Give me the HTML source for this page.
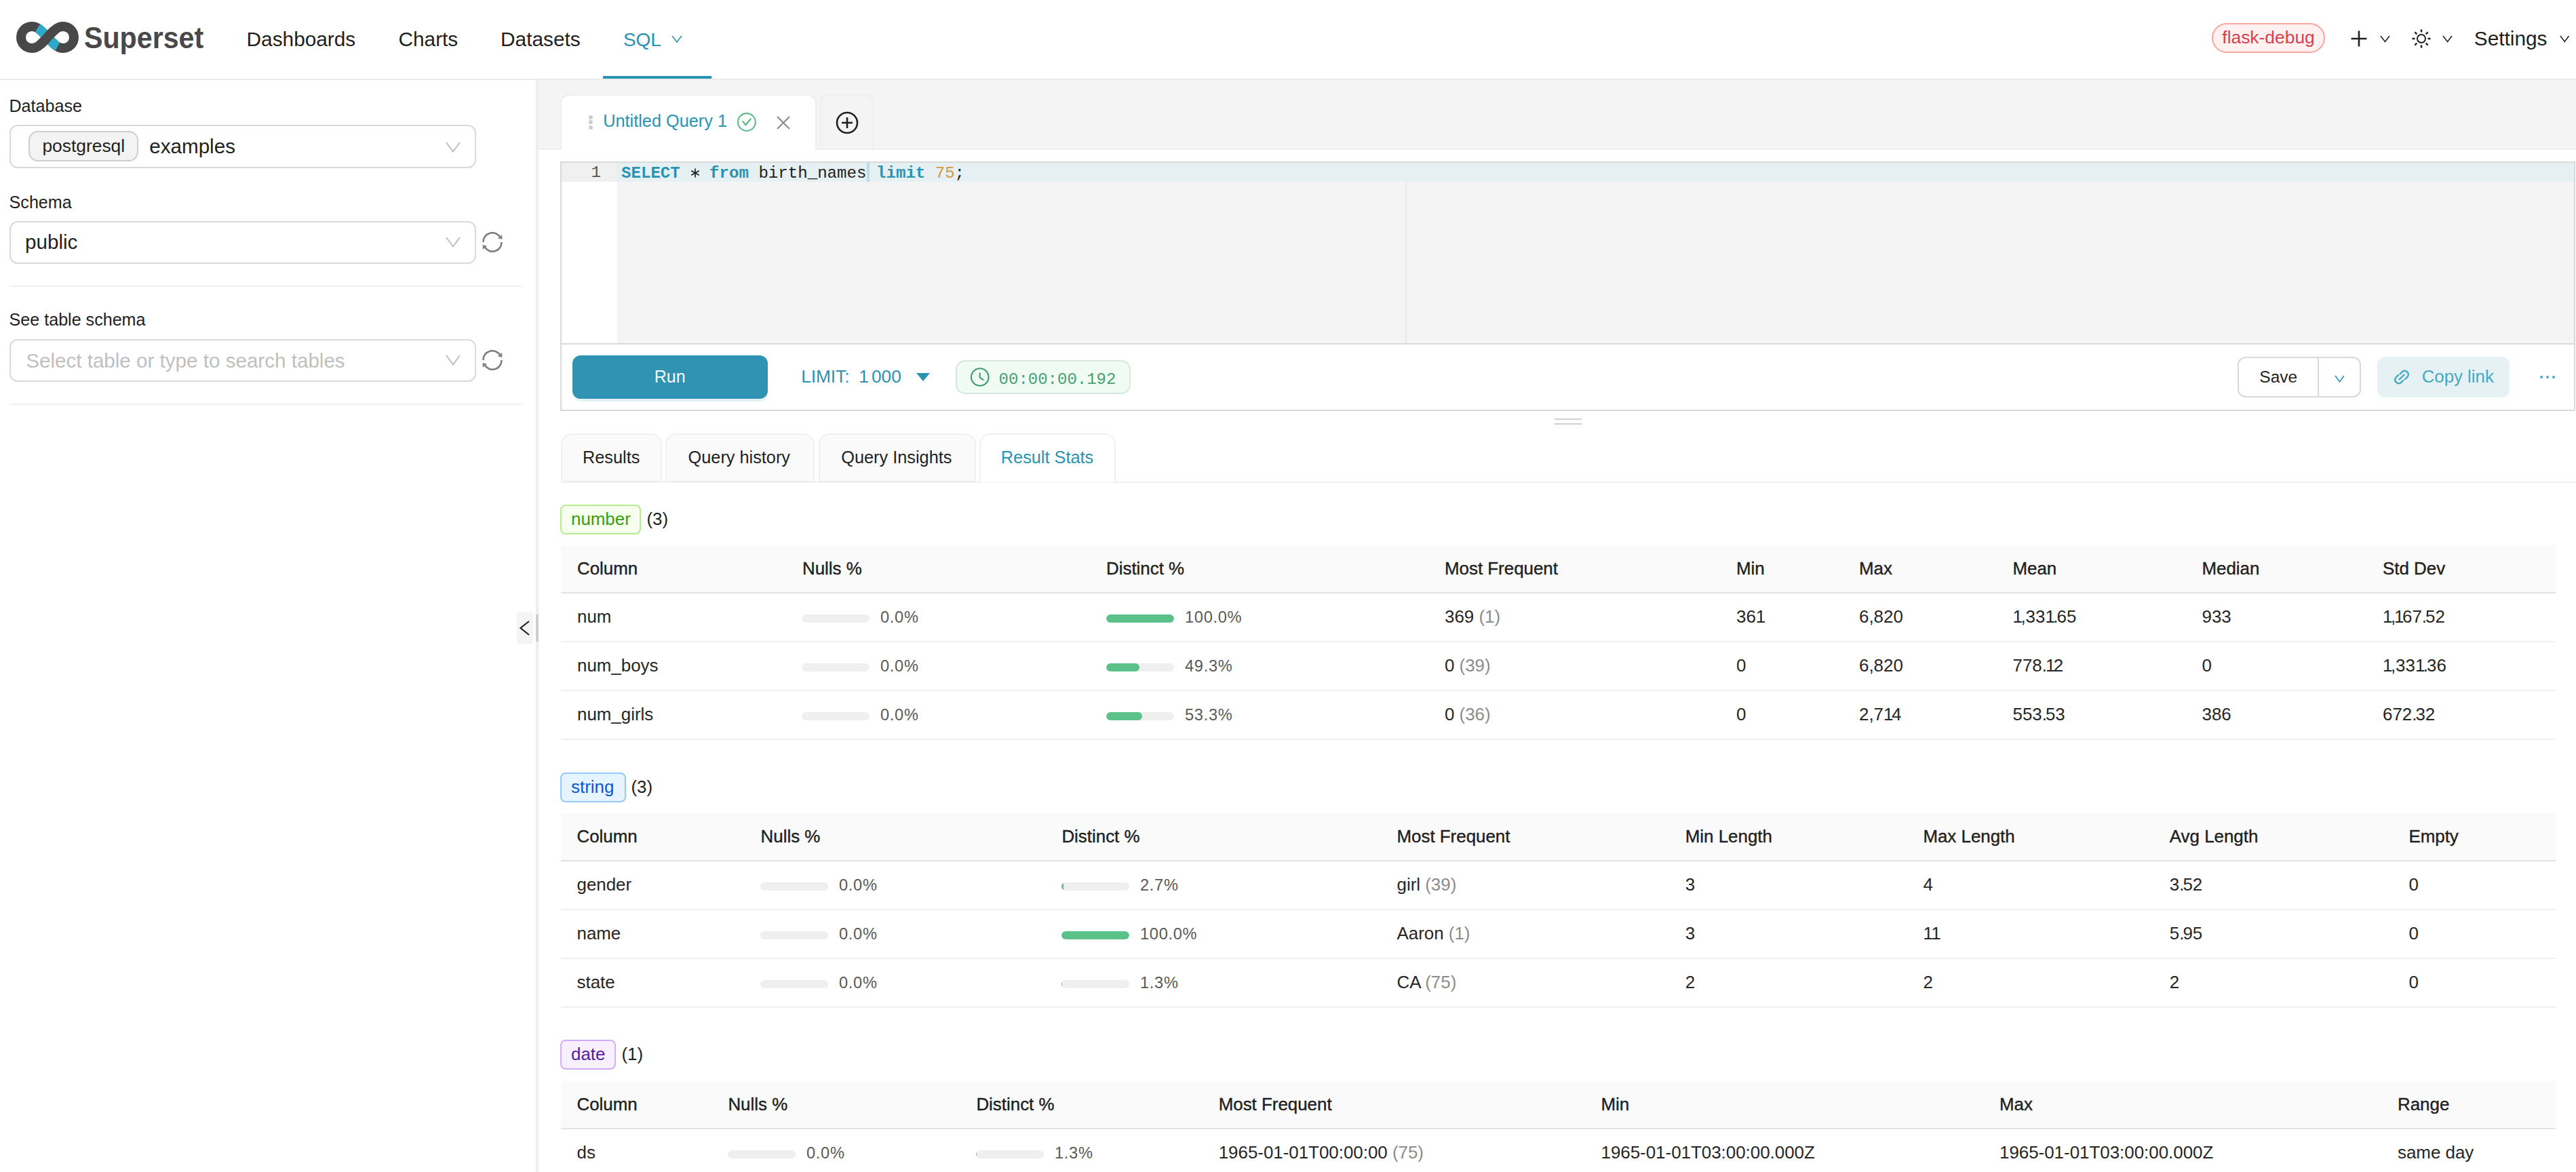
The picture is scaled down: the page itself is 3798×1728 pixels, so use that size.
<!DOCTYPE html>
<html><head><meta charset="utf-8"><title>Superset SQL Lab</title>
<style>
html,body{margin:0;padding:0;width:3798px;height:1728px;overflow:hidden;background:#fff;}
body{position:relative;font-family:"Liberation Sans", sans-serif;}
.b{position:absolute;}
.t{position:absolute;line-height:1;white-space:nowrap;}
</style></head><body>
<div class="b" style="left:0px;top:0px;width:3798px;height:116px;background:#fff;"></div>
<div class="b" style="left:0px;top:116px;width:3798px;height:2px;background:#ebebeb;"></div>
<svg class="b" style="left:24px;top:32px;" width="92" height="46" viewBox="0 0 92 46">
<g fill="none" stroke-width="14" stroke-linecap="butt">
<path d="M46 23 C56 13 60 7 69 7 C78 7 85 14 85 23 C85 32 78 39 69 39 C60 39 56 33 46 23 C36 13 32 7 23 7 C14 7 7 14 7 23 C7 32 14 39 23 39 C32 39 36 33 46 23" stroke="#484848"/>
<path d="M31.5 9.2 C37 12.5 41 17.5 46 23 C51 28.5 55 33.5 60.8 36.8" stroke="#2ea9c8"/>
<path d="M36 33.5 C40 30 43 26.5 46 23 C49 19.5 52 16 56 12.5" stroke="#484848"/>
</g></svg>
<div class="t" style="left:124px;top:33.6px;font-size:44.5px;font-weight:700;color:#484848;transform:scaleX(0.925);transform-origin:0 0;">Superset</div>
<div class="t" style="left:363.6px;top:43.2px;font-size:29.8px;color:#1f1f1f;">Dashboards</div>
<div class="t" style="left:587.5px;top:43.2px;font-size:29.8px;color:#1f1f1f;">Charts</div>
<div class="t" style="left:738.1px;top:43.2px;font-size:29.8px;color:#1f1f1f;">Datasets</div>
<div class="t" style="left:918.9px;top:44.7px;font-size:28px;color:#2893b3;">SQL</div>
<svg class="b" style="left:989px;top:50.5px;" width="18" height="13.0" viewBox="0 0 18 13.0"><polyline points="2,2 9.0,11.0 16,2" fill="none" stroke="#2893b3" stroke-width="1.6" stroke-linecap="butt" stroke-linejoin="miter"/></svg>
<div class="b" style="left:889px;top:112px;width:160px;height:4px;background:#2893b3;"></div>
<div class="b" style="left:3261px;top:34px;width:167px;height:43.5px;background:#fff1f0;border:2px solid #ffa39e;border-radius:22px;box-sizing:border-box;"></div>
<div class="t" style="left:3276.3px;top:42.2px;font-size:26.4px;color:#d9404f;">flask-debug</div>
<svg class="b" style="left:3466px;top:45px;" width="24" height="24" viewBox="0 0 24 24"><path d="M12 0.5 V23.5 M0.5 12 H23.5" stroke="#1f1f1f" stroke-width="2.6" fill="none"/></svg>
<svg class="b" style="left:3507.5px;top:50.5px;" width="17.0" height="12.5" viewBox="0 0 17.0 12.5"><polyline points="2,2 8.5,10.5 15.0,2" fill="none" stroke="#1f1f1f" stroke-width="1.5" stroke-linecap="butt" stroke-linejoin="miter"/></svg>
<svg class="b" style="left:3555px;top:43px;" width="30" height="28" viewBox="0 0 30 28"><circle cx="15" cy="14" r="6" fill="none" stroke="#1f1f1f" stroke-width="2"/><line x1="24.50" y1="14.00" x2="28.50" y2="14.00" stroke="#1f1f1f" stroke-width="2.5"/><line x1="21.72" y1="20.72" x2="24.55" y2="23.55" stroke="#1f1f1f" stroke-width="2.5"/><line x1="15.00" y1="23.50" x2="15.00" y2="27.50" stroke="#1f1f1f" stroke-width="2.5"/><line x1="8.28" y1="20.72" x2="5.45" y2="23.55" stroke="#1f1f1f" stroke-width="2.5"/><line x1="5.50" y1="14.00" x2="1.50" y2="14.00" stroke="#1f1f1f" stroke-width="2.5"/><line x1="8.28" y1="7.28" x2="5.45" y2="4.45" stroke="#1f1f1f" stroke-width="2.5"/><line x1="15.00" y1="4.50" x2="15.00" y2="0.50" stroke="#1f1f1f" stroke-width="2.5"/><line x1="21.72" y1="7.28" x2="24.55" y2="4.45" stroke="#1f1f1f" stroke-width="2.5"/></svg>
<svg class="b" style="left:3599.5px;top:50.5px;" width="17.0" height="12.5" viewBox="0 0 17.0 12.5"><polyline points="2,2 8.5,10.5 15.0,2" fill="none" stroke="#1f1f1f" stroke-width="1.5" stroke-linecap="butt" stroke-linejoin="miter"/></svg>
<div class="t" style="left:3647.8px;top:42.1px;font-size:29.8px;color:#1f1f1f;">Settings</div>
<svg class="b" style="left:3772.5px;top:50.5px;" width="16.5" height="12.5" viewBox="0 0 16.5 12.5"><polyline points="2,2 8.25,10.5 14.5,2" fill="none" stroke="#1f1f1f" stroke-width="1.5" stroke-linecap="butt" stroke-linejoin="miter"/></svg>
<div class="b" style="left:0px;top:118px;width:790px;height:1610px;background:#fff;"></div>
<div class="b" style="left:790px;top:118px;width:4px;height:1610px;background:#efefef;"></div>
<div class="t" style="left:13.5px;top:144.1px;font-size:25.1px;color:#1f1f1f;">Database</div>
<div class="b" style="left:14px;top:184px;width:688px;height:64px;border:2px solid #d9d9d9;border-radius:12px;box-sizing:border-box;background:#fff;"></div>
<div class="b" style="left:42px;top:193px;width:162px;height:45px;border:2px solid #cfcfcf;border-radius:14px;box-sizing:border-box;background:#f3f3f3;"></div>
<div class="t" style="left:62.4px;top:202.0px;font-size:26.4px;color:#1f1f1f;">postgresql</div>
<div class="t" style="left:220.3px;top:200.9px;font-size:29.6px;color:#1f1f1f;">examples</div>
<svg class="b" style="left:656px;top:207.5px;" width="24" height="17.5" viewBox="0 0 24 17.5"><polyline points="2,2 12.0,15.5 22,2" fill="none" stroke="#bfbfbf" stroke-width="2" stroke-linecap="butt" stroke-linejoin="miter"/></svg>
<div class="t" style="left:13.6px;top:286.0px;font-size:25.1px;color:#1f1f1f;">Schema</div>
<div class="b" style="left:14px;top:326px;width:688px;height:62.5px;border:2px solid #d9d9d9;border-radius:12px;box-sizing:border-box;background:#fff;"></div>
<div class="t" style="left:37.1px;top:342.0px;font-size:29.6px;color:#1f1f1f;">public</div>
<svg class="b" style="left:656px;top:348px;" width="24" height="17.5" viewBox="0 0 24 17.5"><polyline points="2,2 12.0,15.5 22,2" fill="none" stroke="#bfbfbf" stroke-width="2" stroke-linecap="butt" stroke-linejoin="miter"/></svg>
<svg class="b" style="left:711px;top:342px;" width="30" height="30" viewBox="0 0 30 30"><g fill="none" stroke="#808080" stroke-width="2.6">
<path d="M1.5 15 A13.3 13.3 0 0 1 26.5 8.2"/>
<path d="M28.5 15 A13.3 13.3 0 0 1 3.5 21.8"/>
</g>
<polygon points="29.3,4 29.3,10.8 22.9,9.4" fill="#808080"/>
<polygon points="0.7,19 0.7,25.8 7.2,20.7" fill="#808080"/></svg>
<div class="b" style="left:14px;top:421px;width:756px;height:2px;background:#f0f0f0;"></div>
<div class="t" style="left:13.6px;top:458.5px;font-size:25.1px;color:#1f1f1f;">See table schema</div>
<div class="b" style="left:14px;top:500px;width:688px;height:62.5px;border:2px solid #d9d9d9;border-radius:12px;box-sizing:border-box;background:#fff;"></div>
<div class="t" style="left:38.2px;top:516.6px;font-size:29.6px;color:#bfbfbf;">Select table or type to search tables</div>
<svg class="b" style="left:656px;top:522px;" width="24" height="17.5" viewBox="0 0 24 17.5"><polyline points="2,2 12.0,15.5 22,2" fill="none" stroke="#bfbfbf" stroke-width="2" stroke-linecap="butt" stroke-linejoin="miter"/></svg>
<svg class="b" style="left:711px;top:516px;" width="30" height="30" viewBox="0 0 30 30"><g fill="none" stroke="#808080" stroke-width="2.6">
<path d="M1.5 15 A13.3 13.3 0 0 1 26.5 8.2"/>
<path d="M28.5 15 A13.3 13.3 0 0 1 3.5 21.8"/>
</g>
<polygon points="29.3,4 29.3,10.8 22.9,9.4" fill="#808080"/>
<polygon points="0.7,19 0.7,25.8 7.2,20.7" fill="#808080"/></svg>
<div class="b" style="left:14px;top:595px;width:756px;height:2px;background:#f0f0f0;"></div>
<div class="b" style="left:762px;top:902px;width:24px;height:48px;background:#f4f4f4;border-radius:5px;"></div>
<svg class="b" style="left:765px;top:914px;" width="18" height="24" viewBox="0 0 18 24"><polyline points="15,2 2.5,12 15,22" fill="none" stroke="#1f1f1f" stroke-width="2.2" stroke-linejoin="miter"/></svg>
<div class="b" style="left:790px;top:906px;width:4px;height:40px;background:#cfcfcf;"></div>
<div class="b" style="left:794px;top:118px;width:3004px;height:1610px;background:#fff;"></div>
<div class="b" style="left:794px;top:118px;width:3004px;height:103px;background:#f4f4f4;"></div>
<div class="b" style="left:794px;top:219px;width:3004px;height:2px;background:#eeeeee;"></div>
<div class="b" style="left:826px;top:139px;width:378px;height:82px;background:#fff;border:2px solid #eeeeee;border-bottom:none;border-radius:14px 14px 0 0;box-sizing:border-box;"></div>
<div class="b" style="left:1209px;top:139px;width:79px;height:82px;background:#f4f4f4;border:2px solid #eeeeee;border-radius:14px 14px 0 0;box-sizing:border-box;"></div>
<div class="b" style="left:868px;top:169.5px;width:6px;height:6.0px;background:#cccccc;border-radius:50%;"></div>
<div class="b" style="left:868px;top:177px;width:6px;height:6px;background:#cccccc;border-radius:50%;"></div>
<div class="b" style="left:868px;top:184.5px;width:6px;height:6.0px;background:#cccccc;border-radius:50%;"></div>
<div class="t" style="left:889.2px;top:166.3px;font-size:25.3px;color:#2893b3;">Untitled Query 1</div>
<svg class="b" style="left:1086px;top:165px;" width="30" height="30" viewBox="0 0 30 30"><circle cx="14.9" cy="15" r="12.9" fill="none" stroke="#5cbb85" stroke-width="2.1"/><polyline points="9.3,14.1 13.4,19.2 20.7,10.4" fill="none" stroke="#5cbb85" stroke-width="2.3" stroke-linejoin="round" stroke-linecap="round"/></svg>
<svg class="b" style="left:1145px;top:171px;" width="20" height="20" viewBox="0 0 20 20"><path d="M1 1 L19 19 M19 1 L1 19" stroke="#8c8c8c" stroke-width="2.2"/></svg>
<svg class="b" style="left:1232px;top:164px;" width="34" height="34" viewBox="0 0 34 34"><circle cx="17" cy="17" r="15" fill="none" stroke="#1f1f1f" stroke-width="2.6"/><path d="M17 9 V25 M9 17 H25" stroke="#1f1f1f" stroke-width="2.6"/></svg>
<div class="b" style="left:826px;top:238px;width:2971px;height:368px;border:2px solid #d9d9d9;box-sizing:border-box;background:#fff;"></div>
<div class="b" style="left:828px;top:240px;width:2967px;height:266px;background:#f4f4f4;"></div>
<div class="b" style="left:828px;top:240px;width:82px;height:266px;background:#fff;"></div>
<div class="b" style="left:828px;top:240px;width:82px;height:28px;background:#f0f0f0;"></div>
<div class="b" style="left:910px;top:240px;width:2885px;height:28px;background:#e6f0f3;"></div>
<div class="b" style="left:2072px;top:268px;width:2px;height:238px;background:#ebebeb;"></div>
<div class="b" style="left:828px;top:506px;width:2967px;height:2px;background:#d9d9d9;"></div>
<div class="t" style="left:916.0px;top:243.5px;font-size:24.1px;color:#2893b3;font-weight:700;font-family:'Liberation Mono', monospace;">SELECT</div>
<svg class="b" style="left:1014.5px;top:244.6px;" width="20" height="20" viewBox="0 0 20 20"><line x1="10.00" y1="3.40" x2="10.00" y2="16.60" stroke="#1f1f1f" stroke-width="1.7"/><line x1="15.72" y1="6.70" x2="4.28" y2="13.30" stroke="#1f1f1f" stroke-width="1.7"/><line x1="15.72" y1="13.30" x2="4.28" y2="6.70" stroke="#1f1f1f" stroke-width="1.7"/></svg>
<div class="t" style="left:1046.1px;top:243.5px;font-size:24.1px;color:#2893b3;font-weight:700;font-family:'Liberation Mono', monospace;">from</div>
<div class="t" style="left:1118.4px;top:243.5px;font-size:24.1px;color:#1f1f1f;font-family:'Liberation Mono', monospace;">birth_names</div>
<div class="t" style="left:1292.0px;top:243.5px;font-size:24.1px;color:#2893b3;font-weight:700;font-family:'Liberation Mono', monospace;">limit</div>
<div class="t" style="left:1378.7px;top:243.5px;font-size:24.1px;color:#d19a3c;font-family:'Liberation Mono', monospace;">75</div>
<div class="t" style="left:1407.6px;top:243.5px;font-size:24.1px;color:#1f1f1f;font-family:'Liberation Mono', monospace;">;</div>
<div class="t" style="left:871.5px;top:242.9px;font-size:24.1px;color:#555;font-family:'Liberation Mono', monospace;">1</div>
<div class="b" style="left:1278px;top:240px;width:4px;height:28px;background:#bcdde7;"></div>
<div class="b" style="left:844px;top:524px;width:288px;height:64px;background:#3193b3;border-radius:12px;box-shadow:0 4px 0 #e6f2f5;"></div>
<div class="t" style="left:964.7px;top:542.8px;font-size:25px;color:#fff;">Run</div>
<div class="t" style="left:1181.2px;top:542.0px;font-size:26.2px;color:#2893b3;">LIMIT:</div>
<div class="t" style="left:1266.2px;top:542.0px;font-size:26.2px;color:#2893b3;">1<span style="letter-spacing:-3px"> </span>000</div>
<svg class="b" style="left:1351px;top:550px;" width="20" height="12" viewBox="0 0 20 12"><polygon points="0,0 20,0 10,12" fill="#2893b3"/></svg>
<div class="b" style="left:1409px;top:531px;width:258px;height:50px;background:#f0fcf3;border:2px solid #d5e8dc;border-radius:14px;box-sizing:border-box;"></div>
<svg class="b" style="left:1430px;top:541px;" width="30" height="30" viewBox="0 0 30 30"><circle cx="14.8" cy="15" r="12.8" fill="none" stroke="#3f9b6c" stroke-width="2.1"/><polyline points="14.6,8.5 14.6,15.5 20.2,19.3" fill="none" stroke="#3f9b6c" stroke-width="2"/></svg>
<div class="t" style="left:1472.6px;top:547.6px;font-size:24px;color:#46a073;font-family:'Liberation Mono', monospace;">00:00:00.192</div>
<div class="b" style="left:3299px;top:526px;width:182px;height:60px;border:2px solid #d9d9d9;border-radius:12px;box-sizing:border-box;background:#fff;"></div>
<div class="b" style="left:3417px;top:528px;width:2px;height:56px;background:#d9d9d9;"></div>
<div class="t" style="left:3331.3px;top:544.3px;font-size:24.5px;color:#1f1f1f;">Save</div>
<svg class="b" style="left:3440.5px;top:551.5px;" width="17.0" height="13.0" viewBox="0 0 17.0 13.0"><polyline points="2,2 8.5,11.0 15.0,2" fill="none" stroke="#2893b3" stroke-width="1.6" stroke-linecap="butt" stroke-linejoin="miter"/></svg>
<div class="b" style="left:3505px;top:526px;width:195px;height:60px;background:#e6f1f4;border-radius:12px;"></div>
<svg class="b" style="left:3527px;top:542px;" width="28" height="28" viewBox="0 0 28 28"><g fill="none" stroke="#46a8c4" stroke-width="2.4" stroke-linecap="round"><path d="M11.5 9.5 L15.5 5.5 A5.5 5.5 0 0 1 23 13 L19 17"/><path d="M16.5 18.5 L12.5 22.5 A5.5 5.5 0 0 1 5 15 L9 11"/><path d="M10.5 17.5 L17.5 10.5"/></g></svg>
<div class="t" style="left:3570.7px;top:542.5px;font-size:25.8px;color:#46a8c4;">Copy link</div>
<div class="b" style="left:3745px;top:554px;width:4px;height:4px;background:#46a8c4;border-radius:50%;"></div>
<div class="b" style="left:3754px;top:554px;width:4px;height:4px;background:#46a8c4;border-radius:50%;"></div>
<div class="b" style="left:3763px;top:554px;width:4px;height:4px;background:#46a8c4;border-radius:50%;"></div>
<div class="b" style="left:2292px;top:617px;width:40px;height:2px;background:#d0d0d0;"></div>
<div class="b" style="left:2292px;top:624px;width:40px;height:2px;background:#d0d0d0;"></div>
<div class="b" style="left:827px;top:710px;width:2971px;height:2px;background:#f0f0f0;"></div>
<div class="b" style="left:827px;top:639px;width:148.5px;height:72px;background:#fafafa;border:2px solid #f0f0f0;border-radius:16px 16px 0 0;box-sizing:border-box;"></div>
<div class="b" style="left:980.5px;top:639px;width:220.5px;height:72px;background:#fafafa;border:2px solid #f0f0f0;border-radius:16px 16px 0 0;box-sizing:border-box;"></div>
<div class="b" style="left:1206.5px;top:639px;width:232.5px;height:72px;background:#fafafa;border:2px solid #f0f0f0;border-radius:16px 16px 0 0;box-sizing:border-box;"></div>
<div class="b" style="left:1444px;top:639px;width:200.5px;height:72px;background:#fff;border:2px solid #f0f0f0;border-bottom:none;border-radius:16px 16px 0 0;box-sizing:border-box;"></div>
<div class="t" style="left:859.0px;top:662.0px;font-size:25.3px;color:#1f1f1f;">Results</div>
<div class="t" style="left:1014.6px;top:662.0px;font-size:25.3px;color:#1f1f1f;">Query history</div>
<div class="t" style="left:1240.3px;top:662.0px;font-size:25.3px;color:#1f1f1f;">Query Insights</div>
<div class="t" style="left:1475.8px;top:662.0px;font-size:25.3px;color:#2893b3;">Result Stats</div>
<div class="b" style="left:826px;top:744px;width:119px;height:43.5px;background:#f6ffed;border:2px solid #b7eb8f;border-radius:8px;box-sizing:border-box;"></div>
<div class="t" style="left:842.0px;top:752.6px;font-size:25.9px;color:#389e0d;">number</div>
<div class="t" style="left:953.4px;top:752.6px;font-size:25.9px;color:#1f1f1f;">(3)</div>
<div class="b" style="left:827px;top:804px;width:2941px;height:69px;background:#fafafa;"></div>
<div class="b" style="left:827px;top:873px;width:2941px;height:2px;background:#e3e3e3;"></div>
<div class="t" style="left:851.0px;top:826.1px;font-size:25.9px;color:#1f1f1f;-webkit-text-stroke:0.4px #1f1f1f;">Column</div>
<div class="t" style="left:1183.0px;top:826.1px;font-size:25.9px;color:#1f1f1f;-webkit-text-stroke:0.4px #1f1f1f;">Nulls %</div>
<div class="t" style="left:1631.0px;top:826.1px;font-size:25.9px;color:#1f1f1f;-webkit-text-stroke:0.4px #1f1f1f;">Distinct %</div>
<div class="t" style="left:2130.0px;top:826.1px;font-size:25.9px;color:#1f1f1f;-webkit-text-stroke:0.4px #1f1f1f;">Most Frequent</div>
<div class="t" style="left:2560.0px;top:826.1px;font-size:25.9px;color:#1f1f1f;-webkit-text-stroke:0.4px #1f1f1f;">Min</div>
<div class="t" style="left:2741.0px;top:826.1px;font-size:25.9px;color:#1f1f1f;-webkit-text-stroke:0.4px #1f1f1f;">Max</div>
<div class="t" style="left:2967.5px;top:826.1px;font-size:25.9px;color:#1f1f1f;-webkit-text-stroke:0.4px #1f1f1f;">Mean</div>
<div class="t" style="left:3246.5px;top:826.1px;font-size:25.9px;color:#1f1f1f;-webkit-text-stroke:0.4px #1f1f1f;">Median</div>
<div class="t" style="left:3513.0px;top:826.1px;font-size:25.9px;color:#1f1f1f;-webkit-text-stroke:0.4px #1f1f1f;">Std Dev</div>
<div class="t" style="left:851.0px;top:896.9px;font-size:25.9px;color:#262626;">num</div>
<div class="b" style="left:1182px;top:906px;width:100px;height:12px;background:#efefef;border-radius:6px;overflow:hidden;"></div>
<div class="t" style="left:1298.0px;top:898.5px;font-size:23.6px;color:#595959;letter-spacing:0.7px;">0.0%</div>
<div class="b" style="left:1631px;top:906px;width:100px;height:12px;background:#efefef;border-radius:6px;overflow:hidden;"><div style="width:100px;height:12px;background:#5ac189;border-radius:6px;"></div></div>
<div class="t" style="left:1747.0px;top:898.5px;font-size:23.6px;color:#595959;letter-spacing:0.7px;">100.0%</div>
<div class="t" style="left:2130px;top:896.9px;font-size:25.9px;color:#262626;">369 <span style="color:#8c8c8c">(1)</span></div>
<div class="t" style="left:2560.0px;top:896.9px;font-size:25.9px;color:#262626;">361</div>
<div class="t" style="left:2741.0px;top:896.9px;font-size:25.9px;color:#262626;">6,820</div>
<div class="t" style="left:2967.5px;top:896.9px;font-size:25.9px;color:#262626;"><span style="letter-spacing:-2.5px">1</span>,33<span style="letter-spacing:-2.5px">1</span><span style="letter-spacing:-2.0px">.</span>65</div>
<div class="t" style="left:3246.5px;top:896.9px;font-size:25.9px;color:#262626;">933</div>
<div class="t" style="left:3513.0px;top:896.9px;font-size:25.9px;color:#262626;"><span style="letter-spacing:-2.5px">1</span><span style="letter-spacing:-2.0px">,</span><span style="letter-spacing:-2.5px">1</span>67<span style="letter-spacing:-2.0px">.</span>52</div>
<div class="b" style="left:827px;top:945px;width:2941px;height:2px;background:#f0f0f0;"></div>
<div class="t" style="left:851.0px;top:968.9px;font-size:25.9px;color:#262626;">num_boys</div>
<div class="b" style="left:1182px;top:978px;width:100px;height:12px;background:#efefef;border-radius:6px;overflow:hidden;"></div>
<div class="t" style="left:1298.0px;top:970.5px;font-size:23.6px;color:#595959;letter-spacing:0.7px;">0.0%</div>
<div class="b" style="left:1631px;top:978px;width:100px;height:12px;background:#efefef;border-radius:6px;overflow:hidden;"><div style="width:49.3px;height:12px;background:#5ac189;border-radius:6px;"></div></div>
<div class="t" style="left:1747.0px;top:970.5px;font-size:23.6px;color:#595959;letter-spacing:0.7px;">49.3%</div>
<div class="t" style="left:2130px;top:968.9px;font-size:25.9px;color:#262626;">0 <span style="color:#8c8c8c">(39)</span></div>
<div class="t" style="left:2560.0px;top:968.9px;font-size:25.9px;color:#262626;">0</div>
<div class="t" style="left:2741.0px;top:968.9px;font-size:25.9px;color:#262626;">6,820</div>
<div class="t" style="left:2967.5px;top:968.9px;font-size:25.9px;color:#262626;">778<span style="letter-spacing:-2.0px">.</span><span style="letter-spacing:-2.5px">1</span>2</div>
<div class="t" style="left:3246.5px;top:968.9px;font-size:25.9px;color:#262626;">0</div>
<div class="t" style="left:3513.0px;top:968.9px;font-size:25.9px;color:#262626;"><span style="letter-spacing:-2.5px">1</span>,33<span style="letter-spacing:-2.5px">1</span><span style="letter-spacing:-2.0px">.</span>36</div>
<div class="b" style="left:827px;top:1017px;width:2941px;height:2px;background:#f0f0f0;"></div>
<div class="t" style="left:851.0px;top:1040.9px;font-size:25.9px;color:#262626;">num_girls</div>
<div class="b" style="left:1182px;top:1050px;width:100px;height:12px;background:#efefef;border-radius:6px;overflow:hidden;"></div>
<div class="t" style="left:1298.0px;top:1042.5px;font-size:23.6px;color:#595959;letter-spacing:0.7px;">0.0%</div>
<div class="b" style="left:1631px;top:1050px;width:100px;height:12px;background:#efefef;border-radius:6px;overflow:hidden;"><div style="width:53.3px;height:12px;background:#5ac189;border-radius:6px;"></div></div>
<div class="t" style="left:1747.0px;top:1042.5px;font-size:23.6px;color:#595959;letter-spacing:0.7px;">53.3%</div>
<div class="t" style="left:2130px;top:1040.9px;font-size:25.9px;color:#262626;">0 <span style="color:#8c8c8c">(36)</span></div>
<div class="t" style="left:2560.0px;top:1040.9px;font-size:25.9px;color:#262626;">0</div>
<div class="t" style="left:2741.0px;top:1040.9px;font-size:25.9px;color:#262626;">2,7<span style="letter-spacing:-2.5px">1</span>4</div>
<div class="t" style="left:2967.5px;top:1040.9px;font-size:25.9px;color:#262626;">553<span style="letter-spacing:-2.0px">.</span>53</div>
<div class="t" style="left:3246.5px;top:1040.9px;font-size:25.9px;color:#262626;">386</div>
<div class="t" style="left:3513.0px;top:1040.9px;font-size:25.9px;color:#262626;">672<span style="letter-spacing:-2.0px">.</span>32</div>
<div class="b" style="left:827px;top:1089px;width:2941px;height:2px;background:#f0f0f0;"></div>
<div class="b" style="left:826px;top:1139px;width:97px;height:43.5px;background:#e6f4ff;border:2px solid #91caff;border-radius:8px;box-sizing:border-box;"></div>
<div class="t" style="left:842.0px;top:1147.6px;font-size:25.9px;color:#0958d9;">string</div>
<div class="t" style="left:930.4px;top:1147.6px;font-size:25.9px;color:#1f1f1f;">(3)</div>
<div class="b" style="left:827px;top:1199px;width:2941px;height:69px;background:#fafafa;"></div>
<div class="b" style="left:827px;top:1268px;width:2941px;height:2px;background:#e3e3e3;"></div>
<div class="t" style="left:850.5px;top:1221.1px;font-size:25.9px;color:#1f1f1f;-webkit-text-stroke:0.4px #1f1f1f;">Column</div>
<div class="t" style="left:1121.6px;top:1221.1px;font-size:25.9px;color:#1f1f1f;-webkit-text-stroke:0.4px #1f1f1f;">Nulls %</div>
<div class="t" style="left:1565.4px;top:1221.1px;font-size:25.9px;color:#1f1f1f;-webkit-text-stroke:0.4px #1f1f1f;">Distinct %</div>
<div class="t" style="left:2059.5px;top:1221.1px;font-size:25.9px;color:#1f1f1f;-webkit-text-stroke:0.4px #1f1f1f;">Most Frequent</div>
<div class="t" style="left:2484.8px;top:1221.1px;font-size:25.9px;color:#1f1f1f;-webkit-text-stroke:0.4px #1f1f1f;">Min Length</div>
<div class="t" style="left:2835.4px;top:1221.1px;font-size:25.9px;color:#1f1f1f;-webkit-text-stroke:0.4px #1f1f1f;">Max Length</div>
<div class="t" style="left:3198.8px;top:1221.1px;font-size:25.9px;color:#1f1f1f;-webkit-text-stroke:0.4px #1f1f1f;">Avg Length</div>
<div class="t" style="left:3551.4px;top:1221.1px;font-size:25.9px;color:#1f1f1f;-webkit-text-stroke:0.4px #1f1f1f;">Empty</div>
<div class="t" style="left:850.5px;top:1291.9px;font-size:25.9px;color:#262626;">gender</div>
<div class="b" style="left:1121px;top:1301px;width:100px;height:12px;background:#efefef;border-radius:6px;overflow:hidden;"></div>
<div class="t" style="left:1237.0px;top:1293.5px;font-size:23.6px;color:#595959;letter-spacing:0.7px;">0.0%</div>
<div class="b" style="left:1565px;top:1301px;width:100px;height:12px;background:#efefef;border-radius:6px;overflow:hidden;"><div style="width:2.7px;height:12px;background:#5ac189;border-radius:6px;"></div></div>
<div class="t" style="left:1681.0px;top:1293.5px;font-size:23.6px;color:#595959;letter-spacing:0.7px;">2.7%</div>
<div class="t" style="left:2059.5px;top:1291.9px;font-size:25.9px;color:#262626;">girl <span style="color:#8c8c8c">(39)</span></div>
<div class="t" style="left:2484.8px;top:1291.9px;font-size:25.9px;color:#262626;">3</div>
<div class="t" style="left:2835.4px;top:1291.9px;font-size:25.9px;color:#262626;">4</div>
<div class="t" style="left:3198.8px;top:1291.9px;font-size:25.9px;color:#262626;">3<span style="letter-spacing:-2.0px">.</span>52</div>
<div class="t" style="left:3551.4px;top:1291.9px;font-size:25.9px;color:#262626;">0</div>
<div class="b" style="left:827px;top:1340px;width:2941px;height:2px;background:#f0f0f0;"></div>
<div class="t" style="left:850.5px;top:1363.9px;font-size:25.9px;color:#262626;">name</div>
<div class="b" style="left:1121px;top:1373px;width:100px;height:12px;background:#efefef;border-radius:6px;overflow:hidden;"></div>
<div class="t" style="left:1237.0px;top:1365.5px;font-size:23.6px;color:#595959;letter-spacing:0.7px;">0.0%</div>
<div class="b" style="left:1565px;top:1373px;width:100px;height:12px;background:#efefef;border-radius:6px;overflow:hidden;"><div style="width:100px;height:12px;background:#5ac189;border-radius:6px;"></div></div>
<div class="t" style="left:1681.0px;top:1365.5px;font-size:23.6px;color:#595959;letter-spacing:0.7px;">100.0%</div>
<div class="t" style="left:2059.5px;top:1363.9px;font-size:25.9px;color:#262626;">Aaron <span style="color:#8c8c8c">(1)</span></div>
<div class="t" style="left:2484.8px;top:1363.9px;font-size:25.9px;color:#262626;">3</div>
<div class="t" style="left:2835.4px;top:1363.9px;font-size:25.9px;color:#262626;"><span style="letter-spacing:-2.5px">1</span>1</div>
<div class="t" style="left:3198.8px;top:1363.9px;font-size:25.9px;color:#262626;">5<span style="letter-spacing:-2.0px">.</span>95</div>
<div class="t" style="left:3551.4px;top:1363.9px;font-size:25.9px;color:#262626;">0</div>
<div class="b" style="left:827px;top:1412px;width:2941px;height:2px;background:#f0f0f0;"></div>
<div class="t" style="left:850.5px;top:1435.9px;font-size:25.9px;color:#262626;">state</div>
<div class="b" style="left:1121px;top:1445px;width:100px;height:12px;background:#efefef;border-radius:6px;overflow:hidden;"></div>
<div class="t" style="left:1237.0px;top:1437.5px;font-size:23.6px;color:#595959;letter-spacing:0.7px;">0.0%</div>
<div class="b" style="left:1565px;top:1445px;width:100px;height:12px;background:#efefef;border-radius:6px;overflow:hidden;"><div style="width:1.3px;height:12px;background:#5ac189;border-radius:6px;"></div></div>
<div class="t" style="left:1681.0px;top:1437.5px;font-size:23.6px;color:#595959;letter-spacing:0.7px;">1.3%</div>
<div class="t" style="left:2059.5px;top:1435.9px;font-size:25.9px;color:#262626;">CA <span style="color:#8c8c8c">(75)</span></div>
<div class="t" style="left:2484.8px;top:1435.9px;font-size:25.9px;color:#262626;">2</div>
<div class="t" style="left:2835.4px;top:1435.9px;font-size:25.9px;color:#262626;">2</div>
<div class="t" style="left:3198.8px;top:1435.9px;font-size:25.9px;color:#262626;">2</div>
<div class="t" style="left:3551.4px;top:1435.9px;font-size:25.9px;color:#262626;">0</div>
<div class="b" style="left:827px;top:1484px;width:2941px;height:2px;background:#f0f0f0;"></div>
<div class="b" style="left:826px;top:1533px;width:82px;height:43.5px;background:#f9f0ff;border:2px solid #d3adf7;border-radius:8px;box-sizing:border-box;"></div>
<div class="t" style="left:842.0px;top:1541.6px;font-size:25.9px;color:#531dab;">date</div>
<div class="t" style="left:916.4px;top:1541.6px;font-size:25.9px;color:#1f1f1f;">(1)</div>
<div class="b" style="left:827px;top:1594px;width:2941px;height:69px;background:#fafafa;"></div>
<div class="b" style="left:827px;top:1663px;width:2941px;height:2px;background:#e3e3e3;"></div>
<div class="t" style="left:850.5px;top:1616.1px;font-size:25.9px;color:#1f1f1f;-webkit-text-stroke:0.4px #1f1f1f;">Column</div>
<div class="t" style="left:1073.4px;top:1616.1px;font-size:25.9px;color:#1f1f1f;-webkit-text-stroke:0.4px #1f1f1f;">Nulls %</div>
<div class="t" style="left:1439.4px;top:1616.1px;font-size:25.9px;color:#1f1f1f;-webkit-text-stroke:0.4px #1f1f1f;">Distinct %</div>
<div class="t" style="left:1796.7px;top:1616.1px;font-size:25.9px;color:#1f1f1f;-webkit-text-stroke:0.4px #1f1f1f;">Most Frequent</div>
<div class="t" style="left:2360.5px;top:1616.1px;font-size:25.9px;color:#1f1f1f;-webkit-text-stroke:0.4px #1f1f1f;">Min</div>
<div class="t" style="left:2948.0px;top:1616.1px;font-size:25.9px;color:#1f1f1f;-webkit-text-stroke:0.4px #1f1f1f;">Max</div>
<div class="t" style="left:3535.0px;top:1616.1px;font-size:25.9px;color:#1f1f1f;-webkit-text-stroke:0.4px #1f1f1f;">Range</div>
<div class="t" style="left:850.5px;top:1686.9px;font-size:25.9px;color:#262626;">ds</div>
<div class="b" style="left:1073px;top:1696px;width:100px;height:12px;background:#efefef;border-radius:6px;overflow:hidden;"></div>
<div class="t" style="left:1189.0px;top:1688.5px;font-size:23.6px;color:#595959;letter-spacing:0.7px;">0.0%</div>
<div class="b" style="left:1439px;top:1696px;width:100px;height:12px;background:#efefef;border-radius:6px;overflow:hidden;"><div style="width:1.3px;height:12px;background:#5ac189;border-radius:6px;"></div></div>
<div class="t" style="left:1555.0px;top:1688.5px;font-size:23.6px;color:#595959;letter-spacing:0.7px;">1.3%</div>
<div class="t" style="left:1796.7px;top:1686.9px;font-size:25.9px;color:#262626;">1965-01-01T00:00:00 <span style="color:#8c8c8c">(75)</span></div>
<div class="t" style="left:2360.5px;top:1686.9px;font-size:25.9px;color:#262626;">1965-01-01T03:00:00.000Z</div>
<div class="t" style="left:2948.0px;top:1686.9px;font-size:25.9px;color:#262626;">1965-01-01T03:00:00.000Z</div>
<div class="t" style="left:3535.0px;top:1686.9px;font-size:25.9px;color:#262626;">same day</div>
<div class="b" style="left:827px;top:1735px;width:2941px;height:2px;background:#f0f0f0;"></div>
</body></html>
